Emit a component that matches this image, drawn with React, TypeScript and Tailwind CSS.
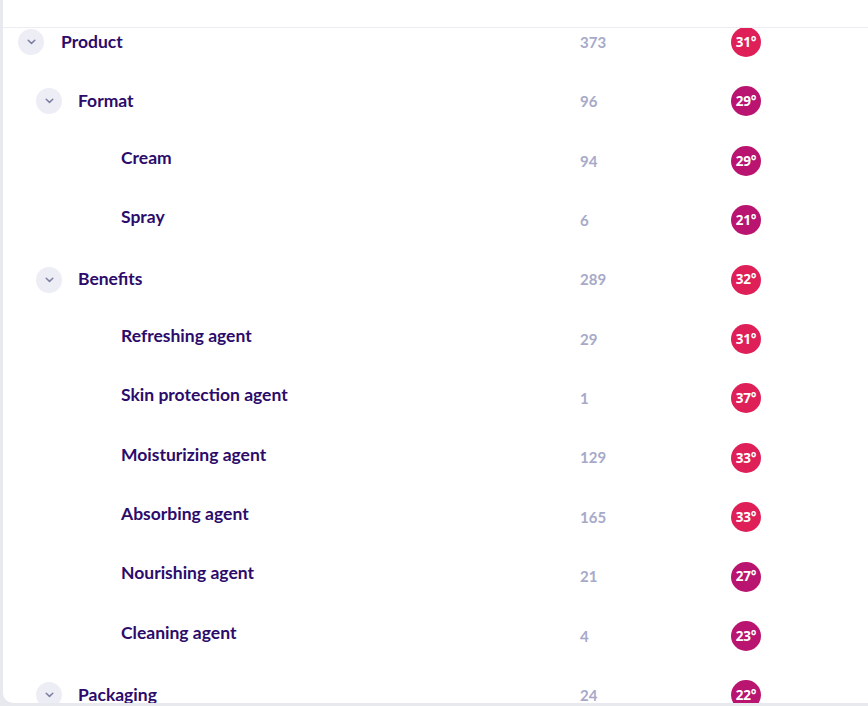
type Row = {
  label: string;
  count: number;
  temp: number;
  level: 0 | 1 | 2;
};

const rows: Row[] = [
  { label: "Product", count: 373, temp: 31, level: 0 },
  { label: "Format", count: 96, temp: 29, level: 1 },
  { label: "Cream", count: 94, temp: 29, level: 2 },
  { label: "Spray", count: 6, temp: 21, level: 2 },
  { label: "Benefits", count: 289, temp: 32, level: 1 },
  { label: "Refreshing agent", count: 29, temp: 31, level: 2 },
  { label: "Skin protection agent", count: 1, temp: 37, level: 2 },
  { label: "Moisturizing agent", count: 129, temp: 33, level: 2 },
  { label: "Absorbing agent", count: 165, temp: 33, level: 2 },
  { label: "Nourishing agent", count: 21, temp: 27, level: 2 },
  { label: "Cleaning agent", count: 4, temp: 23, level: 2 },
  { label: "Packaging", count: 24, temp: 22, level: 1 },
];

function Chevron() {
  return (
    <span className="w-[26px] h-[26px] rounded-full bg-[#ededf5] flex items-center justify-center shrink-0">
      <svg width="9" height="6" viewBox="0 0 9 6" fill="none">
        <path d="M1.2 1.2 L4.5 4.4 L7.8 1.2" stroke="#7f7fa3" strokeWidth="1.5" strokeLinecap="round" strokeLinejoin="round" />
      </svg>
    </span>
  );
}

function TempBadge({ temp }: { temp: number }) {
  const hot = temp >= 30;
  return (
    <span
      className={
        hot
          ? "w-[30px] h-[30px] rounded-full bg-[#de1f58] text-white text-[13.5px] font-bold font-['Noto_Sans'] tracking-[-0.3px] flex items-center justify-center"
          : "w-[30px] h-[30px] rounded-full bg-[#b9146f] text-white text-[13.5px] font-bold font-['Noto_Sans'] tracking-[-0.3px] flex items-center justify-center"
      }
    >
      {temp}°
    </span>
  );
}

function TreeRow({ row }: { row: Row }) {
  return (
    <div className="h-[59.4px] grid grid-cols-[577px_151px_auto] items-center shrink-0">
      {row.level === 0 && (
        <div className="flex items-center pl-[15px] gap-[17px]">
          <Chevron />
          <span className="text-[17.5px] font-bold text-[#2c0b6b]">{row.label}</span>
        </div>
      )}
      {row.level === 1 && (
        <div className="flex items-center pl-[33px] gap-[16px]">
          <Chevron />
          <span className="text-[17.5px] font-bold text-[#2c0b6b]">{row.label}</span>
        </div>
      )}
      {row.level === 2 && (
        <div className="flex items-center pl-[118px] pb-[6px]">
          <span className="text-[17.5px] font-bold text-[#2c0b6b]">{row.label}</span>
        </div>
      )}
      <span className="text-[15px] font-bold text-[#a7a9c9]">{row.count}</span>
      <TempBadge temp={row.temp} />
    </div>
  );
}

export default function App() {
  return (
    <div
      className="h-[706px] w-[868px] bg-[#e8e8ef] pl-[3px] pb-[3px] overflow-hidden"
      style={{ fontFamily: "Lato, 'Noto Sans', sans-serif" }}
    >
      <div className="h-full bg-white rounded-bl-[10px] flex flex-col overflow-hidden">
        <div className="h-[28px] border-b border-[#ececf4] shrink-0" />
        <div className="flex-1 overflow-hidden">
          <div className="flex flex-col -mt-[15.7px]">
            {rows.map((row) => (
              <TreeRow key={row.label} row={row} />
            ))}
          </div>
        </div>
      </div>
    </div>
  );
}
